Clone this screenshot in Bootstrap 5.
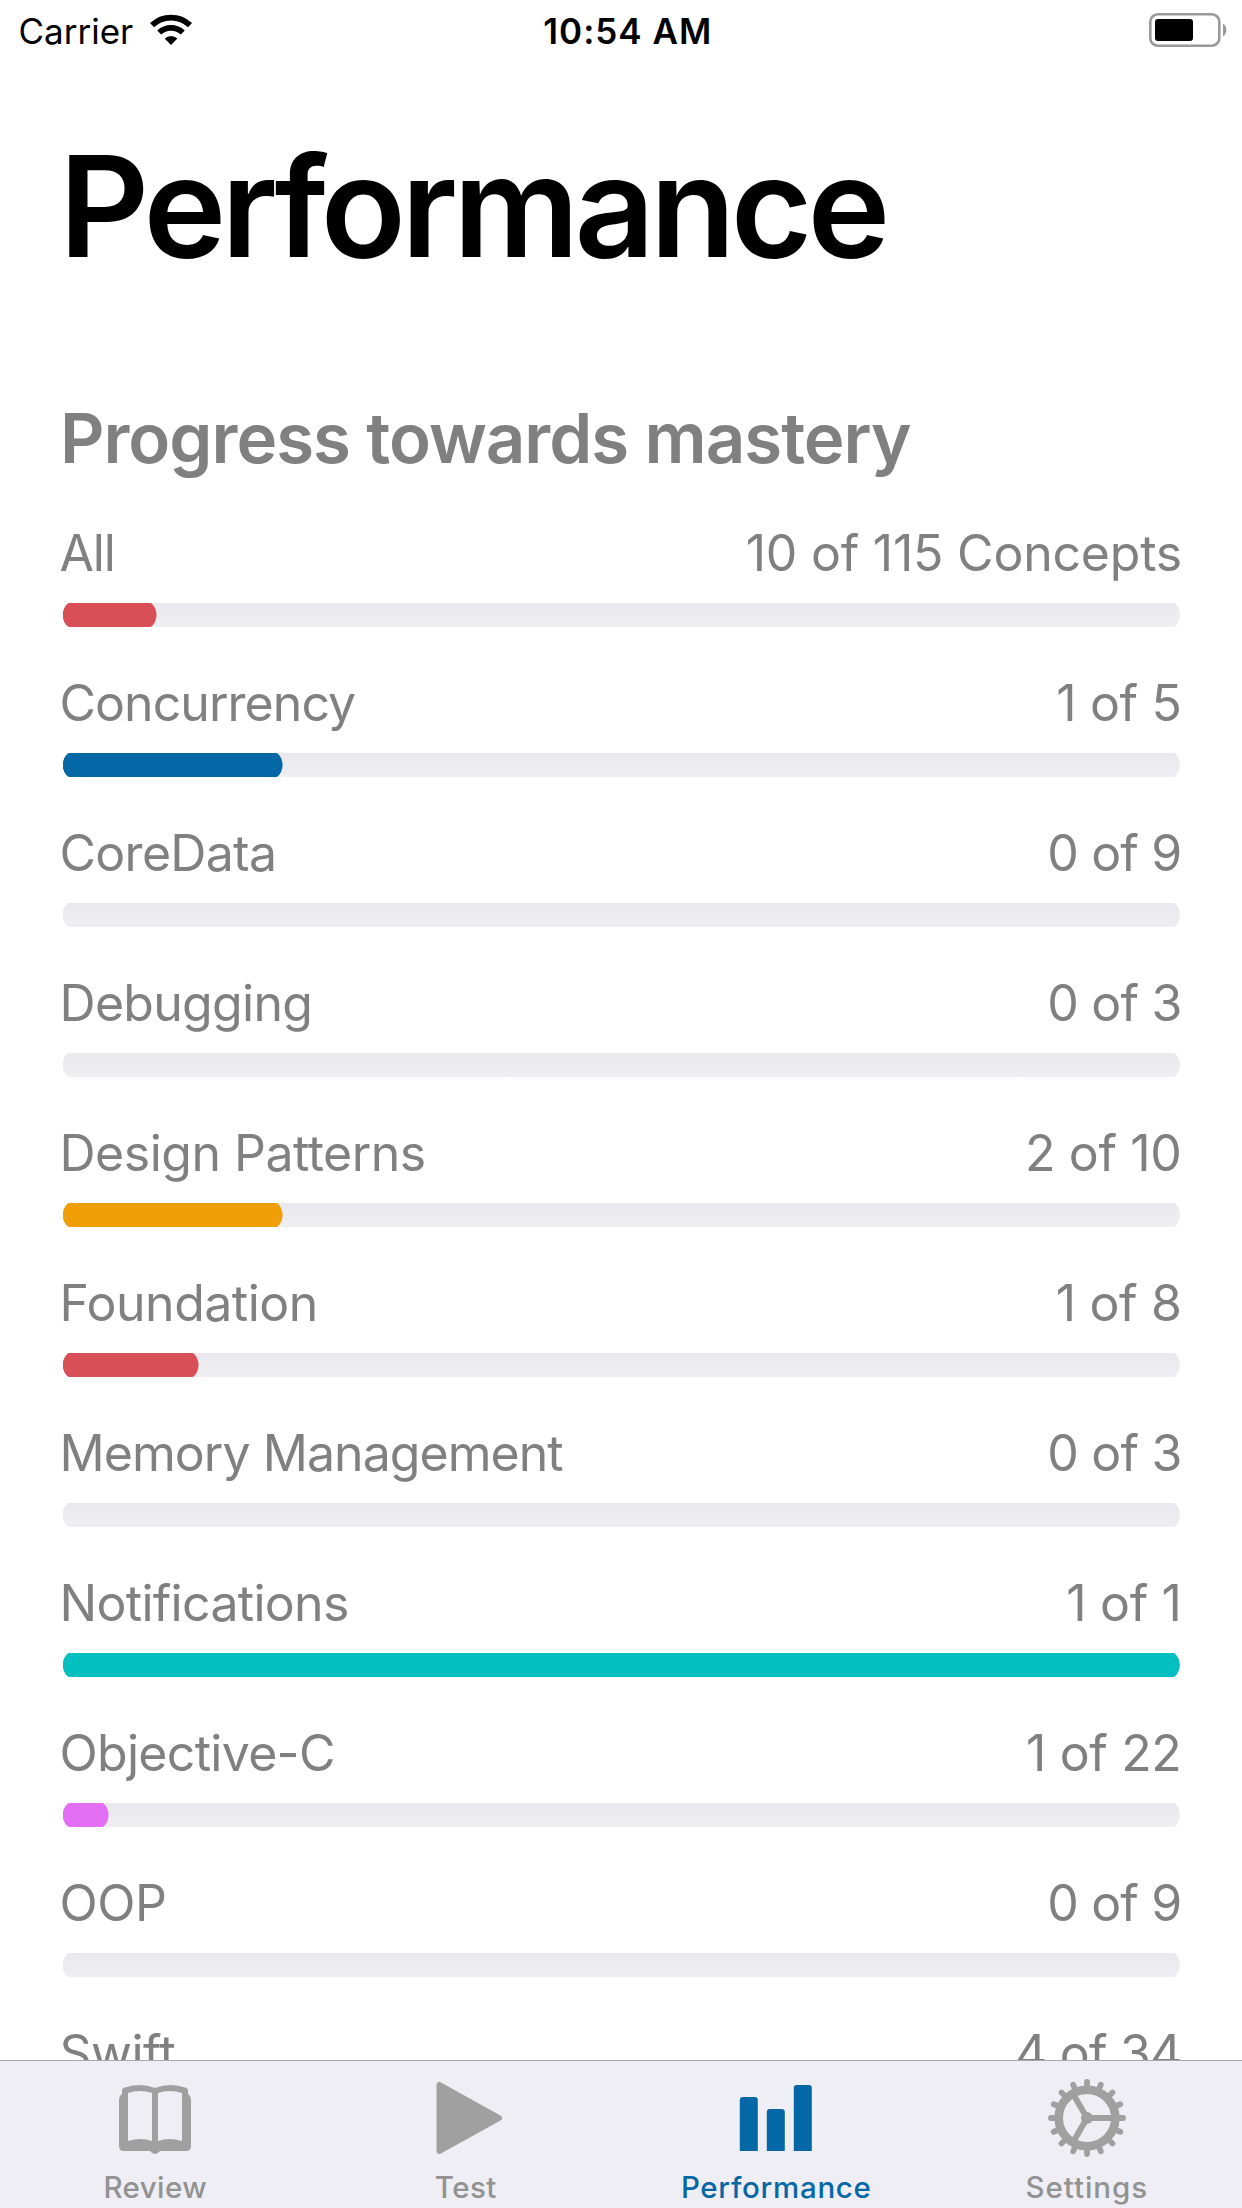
<!DOCTYPE html>
<html lang="en">
<head>
<meta charset="utf-8">
<meta name="viewport" content="width=device-width, initial-scale=1">
<title>Performance</title>
<link href="https://cdn.jsdelivr.net/npm/bootstrap@5.3.0/dist/css/bootstrap.min.css" rel="stylesheet">
<style>
body{font-family:Inter,"Liberation Sans",sans-serif;color:#000;background:#fff}
.screen{height:2208px}
.status{height:63px;line-height:63px;font-size:35px;padding:0 15px 0 18.5px}
.status .clock{font-weight:600;letter-spacing:1px;padding-left:10px}
.status .battery{margin-bottom:3px}
.wifi{margin:0 0 3px 17px}
.content{padding:0 62px 0 59px;min-height:0}
.page-title{font-size:140px;line-height:168px;font-weight:600;letter-spacing:-4.85px;margin:59px 0 106px}
.section-title{font-size:69px;line-height:84px;font-weight:600;letter-spacing:-1.01px;color:#808080;margin:0 0 43px 1px}
.topic{margin-bottom:46px;color:#808080}
.topic-head{font-size:50px;line-height:60px;letter-spacing:-.95px;padding-left:.5px;margin-bottom:20px}
.topic-head .tally{letter-spacing:-.35px;margin-right:-1.5px}
.topic-head .tally.zero{letter-spacing:-.8px}
.topic-head .tally.total{letter-spacing:-.22px;margin-right:-2px}
.topic-head .tight{letter-spacing:-1.2px}
.topic-head .mid{letter-spacing:-.7px}
.topic-head .loose{letter-spacing:-.5px}
.progress.track{height:24px;margin-left:3.5px;border-radius:0;background:linear-gradient(#e9e8ed,#efeef3)}
.progress.track,.track .progress-bar{--e:100%;clip-path:polygon(0 50%,.5px 35%,1.5px 22%,3px 11%,5px 2.5%,6.5px 0,calc(100% - 6.5px) 0,calc(100% - 5px) 2.5%,calc(100% - 3px) 11%,calc(100% - 1.5px) 22%,calc(100% - .5px) 35%,100% 50%,calc(100% - .5px) 65%,calc(100% - 1.5px) 78%,calc(100% - 3px) 89%,calc(100% - 5px) 97.5%,calc(100% - 6.5px) 100%,6.5px 100%,5px 97.5%,3px 89%,1.5px 78%,.5px 65%)}
.c-red{background:#d94f57}.c-blue{background:#0468a6}.c-orange{background:#f09e05}.c-teal{background:#04bfbf}.c-pink{background:#e36ff4}
.tabs{height:148px;background:#efeef4;border-top:1px solid #a9a9ad;color:#929292;font-size:29.5px;line-height:36px;font-weight:500;letter-spacing:.7px}
.tabs .nav-link{padding:0 0 3px;color:inherit}
.tabs .nav-link.active{color:#0468a6;background:none}
.tabs svg{color:#a0a0a0}
.tabs .active svg{color:#0468a6}
.tabs .wide{letter-spacing:.95px}
.tabs .narrow{letter-spacing:.4px}
</style>
</head>
<body>
<div class="screen d-flex flex-column overflow-hidden">
  <header class="status row g-0 flex-shrink-0">
    <div class="col d-flex align-items-center"><span>Carrier</span>
      <svg class="wifi" width="42" height="32" viewBox="0 0 42 32" aria-hidden="true">
        <g fill="none" stroke="#000"><path d="M2 11.2a27.5 27.5 0 0 1 38 0" stroke-width="5.8"/><path d="M9.2 18.6a17 17 0 0 1 23.6 0" stroke-width="5.6"/></g>
        <path d="M14.6 24.6a9.3 9.3 0 0 1 12.8 0L21 31z"/>
      </svg>
    </div>
    <div class="col-auto clock">10:54 AM</div>
    <div class="col d-flex align-items-center justify-content-end">
      <svg class="battery" width="78" height="34" viewBox="0 0 78 34" aria-hidden="true">
        <rect x="1.3" y="1.3" width="69" height="31.4" rx="7.5" fill="none" stroke="#999" stroke-width="2.6"/>
        <rect x="6" y="6" width="38" height="22" rx="3"/><path d="M74 10.5a8 8 0 0 1 0 13z" fill="#999"/>
      </svg>
    </div>
  </header>

  <main class="content flex-grow-1 overflow-hidden">
    <h1 class="page-title">Performance</h1>
    <h2 class="section-title">Progress towards mastery</h2>

    <div class="topic"><div class="topic-head d-flex justify-content-between"><span class="tight">All</span><span class="tally total">10 of 115 Concepts</span></div>
      <div class="progress track"><div class="progress-bar c-red" style="width:8.42%"></div></div></div>
    <div class="topic"><div class="topic-head d-flex justify-content-between"><span>Concurrency</span><span class="tally">1 of 5</span></div>
      <div class="progress track"><div class="progress-bar c-blue" style="width:19.7%"></div></div></div>
    <div class="topic"><div class="topic-head d-flex justify-content-between"><span class="mid">CoreData</span><span class="tally zero">0 of 9</span></div>
      <div class="progress track"></div></div>
    <div class="topic"><div class="topic-head d-flex justify-content-between"><span class="mid">Debugging</span><span class="tally zero">0 of 3</span></div>
      <div class="progress track"></div></div>
    <div class="topic"><div class="topic-head d-flex justify-content-between"><span class="loose">Design Patterns</span><span class="tally">2 of 10</span></div>
      <div class="progress track"><div class="progress-bar c-orange" style="width:19.7%"></div></div></div>
    <div class="topic"><div class="topic-head d-flex justify-content-between"><span class="loose">Foundation</span><span class="tally">1 of 8</span></div>
      <div class="progress track"><div class="progress-bar c-red" style="width:12.18%"></div></div></div>
    <div class="topic"><div class="topic-head d-flex justify-content-between"><span>Memory Management</span><span class="tally zero">0 of 3</span></div>
      <div class="progress track"></div></div>
    <div class="topic"><div class="topic-head d-flex justify-content-between"><span class="mid">Notifications</span><span class="tally">1 of 1</span></div>
      <div class="progress track"><div class="progress-bar c-teal" style="width:100%"></div></div></div>
    <div class="topic"><div class="topic-head d-flex justify-content-between"><span class="mid">Objective-C</span><span class="tally">1 of 22</span></div>
      <div class="progress track"><div class="progress-bar c-pink" style="width:4.13%"></div></div></div>
    <div class="topic"><div class="topic-head d-flex justify-content-between"><span class="loose">OOP</span><span class="tally zero">0 of 9</span></div>
      <div class="progress track"></div></div>
    <div class="topic"><div class="topic-head d-flex justify-content-between"><span class="loose">Swift</span><span class="tally zero">4 of 34</span></div>
      <div class="progress track"></div></div>
  </main>

  <nav class="tabs nav nav-fill flex-nowrap flex-shrink-0">
    <a class="nav-link col-3 d-flex flex-column align-items-center justify-content-end" href="#">
      <svg width="110" height="108" viewBox="0 0 110 108" fill="currentColor" aria-hidden="true">
        <path fill-rule="evenodd" d="M22 33V29.500Q22 27.500 24 26.700Q40 21 55 27Q70 21 86 26.700Q88 27.500 88 29.500V33Q91 35 91 38V85Q91 90 86 90H60Q58 93 55 93T50 90H24Q19 90 19 85V38Q19 35 22 33ZM28 32V80Q41 76 52 80V32Q40 28 28 32ZM58 32V80Q69 76 82 80V32Q70 28 58 32Z"/>
      </svg><span class="narrow">Review</span></a>
    <a class="nav-link col-3 d-flex flex-column align-items-center justify-content-end" href="#">
      <svg width="110" height="108" viewBox="0 0 110 108" fill="currentColor" stroke="currentColor" aria-hidden="true">
        <path d="M28.500 24V90L88 57Z" stroke-width="6" stroke-linejoin="round"/>
      </svg><span class="narrow">Test</span></a>
    <a class="nav-link active col-3 d-flex flex-column align-items-center justify-content-end" href="#">
      <svg width="110" height="108" viewBox="0 0 110 108" fill="currentColor" aria-hidden="true">
        <path d="M18.800 90V39q0-3 3-3h12q3 0 3 3v51zM45.800 90V51q0-3 3-3h12q3 0 3 3v39zM72.800 90V27q0-3 3-3h12q3 0 3 3v63z"/>
      </svg><span>Performance</span></a>
    <a class="nav-link col-3 d-flex flex-column align-items-center justify-content-end" href="#">
      <svg width="110" height="108" viewBox="0 0 110 108" aria-hidden="true">
        <g transform="translate(55 57)" fill="none" stroke="currentColor" stroke-linecap="round">
          <circle r="28.300" stroke-width="8.600"/>
          <g stroke-width="5.800"><path id="tooth" d="M0-30V-36M0 30V36M-30 0H-36M30 0H36"/>
            <use href="#tooth" transform="rotate(22.5)"/><use href="#tooth" transform="rotate(45)"/><use href="#tooth" transform="rotate(67.5)"/></g>
          <path d="M0 0H26M0 0L-13-22.500M0 0L-13 22.500" stroke-width="6" stroke-linecap="butt"/>
          <circle r="6" fill="currentColor" stroke="none"/>
        </g>
      </svg><span class="wide">Settings</span></a>
  </nav>
</div>
<script src="https://cdn.jsdelivr.net/npm/bootstrap@5.3.0/dist/js/bootstrap.bundle.min.js"></script>
</body>
</html>
